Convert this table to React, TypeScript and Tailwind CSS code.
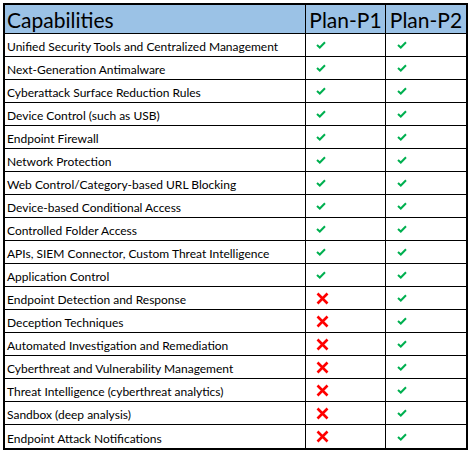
import { Fragment } from 'react';

const rows: [string, boolean][] = [
  ['Unified Security Tools and Centralized Management', true],
  ['Next-Generation Antimalware', true],
  ['Cyberattack Surface Reduction Rules', true],
  ['Device Control (such as USB)', true],
  ['Endpoint Firewall', true],
  ['Network Protection', true],
  ['Web Control/Category-based URL Blocking', true],
  ['Device-based Conditional Access', true],
  ['Controlled Folder Access', true],
  ['APIs, SIEM Connector, Custom Threat Intelligence', true],
  ['Application Control', true],
  ['Endpoint Detection and Response', false],
  ['Deception Techniques', false],
  ['Automated Investigation and Remediation', false],
  ['Cyberthreat and Vulnerability Management', false],
  ['Threat Intelligence (cyberthreat analytics)', false],
  ['Sandbox (deep analysis)', false],
  ['Endpoint Attack Notifications', false],
];

const Check = () => (
  <svg width="10" height="8" viewBox="0 0 10 8">
    <path d="M1 4 L3.8 6.5 L9 1.2" fill="none" stroke="#00b050" strokeWidth="2" />
  </svg>
);

const Cross = () => (
  <svg width="13" height="13" viewBox="0 0 13 13">
    <path d="M1.5 1.5 L11.5 11.5 M11.5 1.5 L1.5 11.5" stroke="#ff0000" strokeWidth="2.6" />
  </svg>
);

const App = () => {
  return (
    <div className="w-[469px] h-[452px] bg-white pt-[3px] pl-[3px]" style={{ fontFamily: 'Lato, "Open Sans", sans-serif' }}>
      <div className="grid grid-cols-[301px_80px_80px] w-fit border-2 border-black text-black">
        <div className="h-[29px] bg-[#9bc2e6] border-b border-r border-black flex items-center pl-[2px] text-[21px] leading-none">
          Capabilities
        </div>
        <div className="h-[29px] bg-[#9bc2e6] border-b border-r border-black flex items-center justify-center text-[21px] leading-none">
          Plan-P1
        </div>
        <div className="h-[29px] bg-[#9bc2e6] border-b border-black flex items-center justify-center text-[21px] leading-none">
          Plan-P2
        </div>
        {rows.map(([label, p1], i) => {
          const last = i === rows.length - 1;
          const bb = last ? '' : 'border-b';
          return (
            <Fragment key={label}>
              <div className={`h-[23px] ${bb} border-r border-black flex items-end pb-[3px] pl-[2px] text-[12px] leading-none whitespace-nowrap`}>
                {label}
              </div>
              <div className={`h-[23px] ${bb} border-r border-black flex items-center pl-[10px]`}>
                {p1 ? <Check /> : <Cross />}
              </div>
              <div className={`h-[23px] ${bb} border-black flex items-center pl-[11px]`}>
                <Check />
              </div>
            </Fragment>
          );
        })}
      </div>
    </div>
  );
};

export default App;
